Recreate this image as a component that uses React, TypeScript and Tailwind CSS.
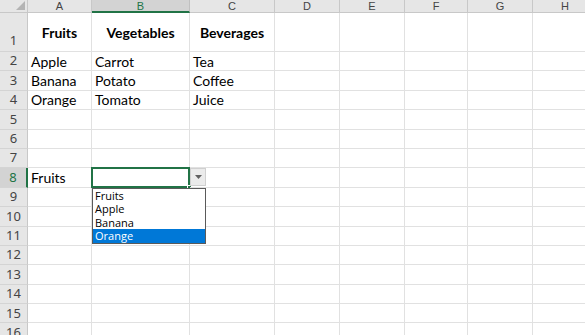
// Spreadsheet with a data-validation dropdown open on B8
const COLS = [
  { key: 'A', w: 'w-[64px]' },
  { key: 'B', w: 'w-[98px]' },
  { key: 'C', w: 'w-[85px]' },
  { key: 'D', w: 'w-[65px]' },
  { key: 'E', w: 'w-[65px]' },
  { key: 'F', w: 'w-[63px]' },
  { key: 'G', w: 'w-[65px]' },
  { key: 'H', w: 'w-[65px]' },
];

const DATA: Record<number, string[]> = {
  1: ['Fruits', 'Vegetables', 'Beverages'],
  2: ['Apple', 'Carrot', 'Tea'],
  3: ['Banana', 'Potato', 'Coffee'],
  4: ['Orange', 'Tomato', 'Juice'],
  8: ['Fruits'],
};

const ROWS = Array.from({ length: 16 }, (_, i) => i + 1);
const OPTIONS = ['Fruits', 'Apple', 'Banana', 'Orange'];

function Dropdown() {
  return (
    <>
      <div className="absolute inset-[-1px] border-2 border-[#217346] pointer-events-none" />
      <div className="absolute right-[-3px] bottom-[-3px] w-[5px] h-[5px] bg-[#217346] border border-white" />
      <div className="absolute left-[calc(100%+1px)] top-0 w-[16px] h-[18px] bg-[#ebebeb] border border-[#d0d0d0] flex items-center justify-center">
        <svg width="7" height="4" viewBox="0 0 7 4"><path d="M0 0h7L3.5 4z" fill="#606060" /></svg>
      </div>
      <div className="absolute left-0 top-[calc(100%+1px)] w-[114px] bg-white border border-[#5a5a5a] z-10 font-['Open_Sans',sans-serif] text-[11px] text-black">
        {OPTIONS.map((o) => (
          <div key={o} className={`h-[13.5px] leading-[13.5px] pl-[2px] ${o === 'Orange' ? 'bg-[#0078d7] text-white' : ''}`}>{o}</div>
        ))}
      </div>
    </>
  );
}

export default function App() {
  return (
    <div className="w-[585px] h-[335px] overflow-hidden bg-white font-['Lato',sans-serif] select-none">
      {/* column headers */}
      <div className="flex h-[13px]">
        <div className="w-[28px] shrink-0 bg-[#e6e6e6] border-r border-b border-[#c8c8c8] relative">
          <svg className="absolute right-[2px] bottom-[2px]" width="9" height="9" viewBox="0 0 9 9"><path d="M9 0v9H0z" fill="#b4b4b4" /></svg>
        </div>
        {COLS.map((c) => (
          <div
            key={c.key}
            className={`${c.w} shrink-0 border-r flex items-start justify-center text-[11px] leading-[12px] font-['Liberation_Sans',sans-serif] ${
              c.key === 'B'
                ? 'bg-[#d3d3d3] text-[#217346] border-b-2 border-b-[#217346] border-r-[#c0c0c0]'
                : 'bg-[#e6e6e6] text-[#444] border-b border-[#c8c8c8]'
            }`}
          >
            {c.key}
          </div>
        ))}
        <div className="flex-1 bg-[#e6e6e6] border-b border-[#c8c8c8]" />
      </div>

      {ROWS.map((r) => {
        const cells = DATA[r] || [];
        const tall = r === 1;
        return (
          <div key={r} className={`flex ${tall ? 'h-[39px]' : 'h-[19.4px]'}`}>
            <div
              className={`w-[28px] shrink-0 flex justify-center text-[13px] font-['Noto_Sans',sans-serif] border-b border-[#d4d4d4] ${
                tall ? 'items-end pb-[1px]' : 'items-center'
              } ${r === 8 ? 'bg-[#d3d3d3] text-[#217346] border-r-2 border-r-[#217346]' : 'bg-[#e6e6e6] text-[#444] border-r border-r-[#c8c8c8]'}`}
            >
              {r}
            </div>
            {COLS.map((c, i) => (
              <div
                key={c.key}
                className={`${c.w} shrink-0 relative border-r border-b border-[#e1e1e1] flex items-center text-[14px] text-black whitespace-nowrap ${
                  tall ? 'justify-center font-bold' : 'pl-[3px]'
                }`}
              >
                {cells[i]}
                {r === 8 && c.key === 'B' && <Dropdown />}
              </div>
            ))}
            <div className="flex-1 border-b border-[#e1e1e1]" />
          </div>
        );
      })}
    </div>
  );
}
